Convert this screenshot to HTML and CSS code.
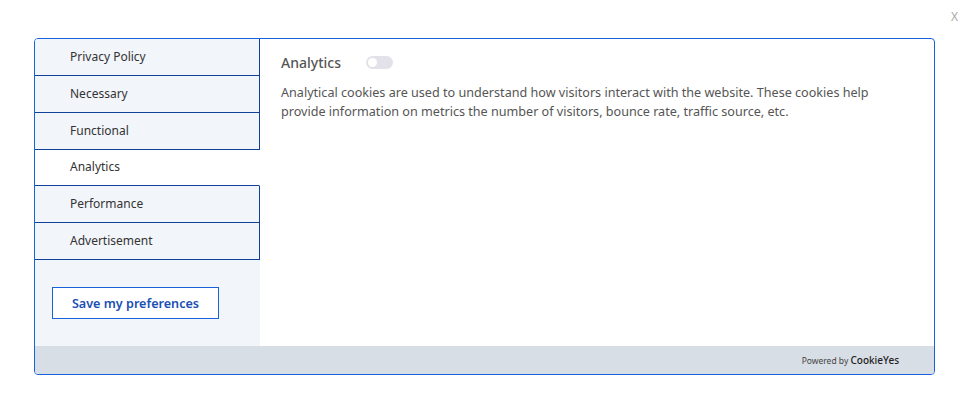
FILE: index.html
```html
<!DOCTYPE html>
<html lang="en">
<head>
    <meta charset="UTF-8" />
    <title>Cookie Preferences</title>
    <link rel="stylesheet" href="styles.css">
</head>
<body>
    <div class="close-btn">X</div>

    <div id="modal">
        <div class="modal-body">
            <div class="sidebar">
                <nav class="tabs">
                    <a href="#" class="tab">Privacy Policy</a>
                    <a href="#" class="tab">Necessary</a>
                    <a href="#" class="tab">Functional</a>
                    <a href="#" class="tab active">Analytics</a>
                    <a href="#" class="tab">Performance</a>
                    <a href="#" class="tab">Advertisement</a>
                </nav>
                <div class="save-wrap">
                    <button class="save-btn">Save my preferences</button>
                </div>
            </div>

            <section class="content">
                <div class="content-head">
                    <h3>Analytics</h3>
                    <span class="toggle"><span class="knob"></span></span>
                </div>
                <p class="content-desc">
                    Analytical cookies are used to understand how visitors interact with the website. These cookies help
                    provide information on metrics the number of visitors, bounce rate, traffic source, etc.
                </p>
            </section>
        </div>

        <footer class="powered">
            Powered by <b>CookieYes</b>
        </footer>
    </div>
</body>
</html>
```

FILE: styles.css
```css
body {
    font-family: "Noto Sans", "Open Sans", sans-serif;
    background-color: #ffffff;
    margin: 0;
    padding: 0;
}
.close-btn {
    position: absolute;
    top: 8px;
    right: 13px;
    color: #aaa;
    font-size: 12px;
}
#modal {
    width: 899px;
    margin: 38px 0 0 34px;
    border: 1px solid #1863dc;
    border-radius: 4px;
    overflow: hidden;
}
.modal-body {
    display: flex;
    height: 307px;
}
.sidebar {
    width: 225px;
    background-color: #f2f5fa;
    display: flex;
    flex-direction: column;
}
.tabs {
    display: flex;
    flex-direction: column;
}
.tab {
    display: block;
    height: 36px;
    line-height: 36px;
    padding-left: 35px;
    color: #333;
    font-size: 12px;
    text-decoration: none;
    border-right: 1px solid #10429a;
    border-bottom: 1px solid #10429a;
}
.tab.active {
    height: 35px;
    line-height: 34px;
    background-color: #fff;
    border-right-color: #fff;
}
.save-wrap {
    padding: 27px 0 0 17px;
}
.save-btn {
    width: 167px;
    height: 32px;
    background: #fff;
    border: 1px solid #1863dc;
    color: #1a4fb3;
    font-family: "Noto Sans", sans-serif;
    font-size: 12.6px;
    font-weight: 600;
    cursor: pointer;
}
.content {
    flex: 1;
    padding: 14px 21px;
    color: #555;
}
.content-head {
    display: flex;
    align-items: center;
    gap: 25px;
}
.content-head h3 {
    margin: 0;
    font-size: 14px;
    font-weight: 500;
    color: #555;
}
.toggle {
    position: relative;
    width: 27px;
    height: 13px;
    border-radius: 7px;
    background-color: #e3e1ea;
}
.knob {
    position: absolute;
    top: 2px;
    left: 2px;
    width: 9px;
    height: 9px;
    border-radius: 50%;
    background: #fff;
}
.content-desc {
    margin: 11px 0 0 0;
    font-size: 12.6px;
    line-height: 19px;
}
.powered {
    background-color: #d8dee6;
    height: 28px;
    line-height: 28px;
    text-align: right;
    padding-right: 35px;
    font-size: 8.5px;
    color: #444;
}
.powered b {
    font-size: 10px;
    font-weight: 500;
    color: #222;
}
```
